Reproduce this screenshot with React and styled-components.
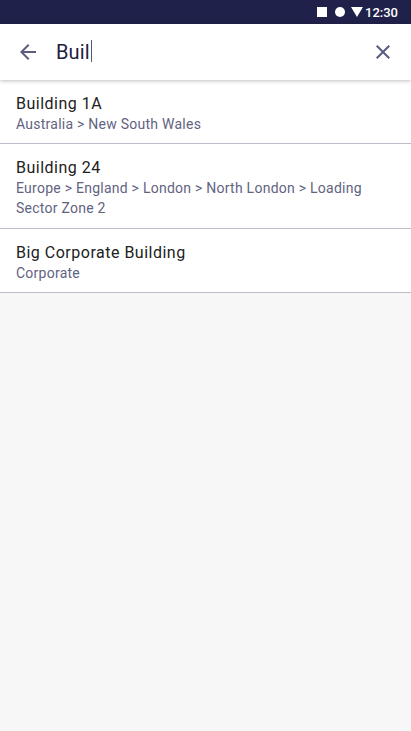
import { useState } from 'react';
import styled, { createGlobalStyle } from 'styled-components';

const GlobalStyle = createGlobalStyle`
    * {
        box-sizing: border-box;
    }

    body {
        margin: 0;
        background-color: #f7f7f7;
        font-family: Roboto, sans-serif;
    }
`;

const Container = styled.div`
    min-height: 100vh;
    background-color: #f7f7f7;
`;

const StatusBar = styled.div`
    height: 24px;
    padding-right: 13px;
    display: flex;
    align-items: center;
    justify-content: flex-end;
    background-color: #20214a;
    color: white;
`;

const StatusIcons = styled.svg`
    display: block;
    width: 47px;
    height: 24px;
    fill: white;
`;

const Time = styled.span`
    width: 33px;
    margin-left: 1px;
    padding-top: 1px;
    font-size: 13px;
    font-weight: 500;
    line-height: 16px;
    white-space: nowrap;
`;

const SearchBar = styled.div`
    position: relative;
    height: 56px;
    padding: 0 16px;
    display: flex;
    align-items: center;
    background-color: white;
    box-shadow: 0 1px 4px rgba(0, 0, 0, 0.26);
`;

const IconButton = styled.button`
    width: 24px;
    height: 24px;
    padding: 0;
    border: none;
    background: none;
    cursor: pointer;
`;

const Icon = styled.svg`
    display: block;
    width: 24px;
    height: 24px;
    fill: #5b5c80;
`;

const Query = styled.div`
    flex: 1;
    margin-left: 16px;
    display: flex;
    align-items: center;
    color: #20203f;
    font-size: 20px;
    line-height: 24px;
    letter-spacing: 0.15px;
`;

const Caret = styled.span`
    width: 1px;
    height: 22px;
    margin: 0 0 2px 1px;
    background-color: #53547a;
`;

const Results = styled.ul`
    margin: 0;
    padding: 0;
    list-style: none;
`;

const Result = styled.li`
    padding: 14px 16px ${(props) => (props.$multiline ? 10 : 9)}px;
    border-bottom: 1px solid #bdbdc8;
    background-color: white;
`;

const Name = styled.div`
    color: #212121;
    font-size: 16px;
    line-height: 20px;
    letter-spacing: 0.5px;
`;

const Path = styled.div`
    color: #62637f;
    font-size: 14px;
    line-height: 20px;
    letter-spacing: 0.25px;
`;

const buildings = [
    { id: 1, name: 'Building 1A', path: ['Australia', 'New South Wales'] },
    {
        id: 2,
        name: 'Building 24',
        path: ['Europe', 'England', 'London', 'North London', 'Loading Sector Zone 2'],
    },
    { id: 3, name: 'Big Corporate Building', path: ['Corporate'] },
];

const App = () => {
    const [query, setQuery] = useState('Buil');

    return (
        <Container>
            <GlobalStyle />
            <StatusBar>
                <StatusIcons viewBox="0 0 47 24">
                    <rect x="0" y="7" width="10" height="10" />
                    <circle cx="23" cy="12" r="5" />
                    <path d="M34 7h12l-6 10z" />
                </StatusIcons>
                <Time>12:30</Time>
            </StatusBar>
            <SearchBar>
                <IconButton aria-label="Back">
                    <Icon viewBox="0 0 24 24">
                        <path d="M20 11H7.83l5.59-5.59L12 4l-8 8 8 8 1.41-1.41L7.83 13H20v-2z" />
                    </Icon>
                </IconButton>
                <Query>
                    {query}
                    <Caret />
                </Query>
                <IconButton aria-label="Clear" onClick={() => setQuery('')}>
                    <Icon viewBox="0 0 24 24">
                        <path d="M19 6.41L17.59 5 12 10.59 6.41 5 5 6.41 10.59 12 5 17.59 6.41 19 12 13.41 17.59 19 19 17.59 13.41 12z" />
                    </Icon>
                </IconButton>
            </SearchBar>
            <Results>
                {buildings.map((building) => (
                    <Result key={building.id} $multiline={building.path.length > 2}>
                        <Name>{building.name}</Name>
                        <Path>{building.path.join(' > ')}</Path>
                    </Result>
                ))}
            </Results>
        </Container>
    );
};

export default App;
